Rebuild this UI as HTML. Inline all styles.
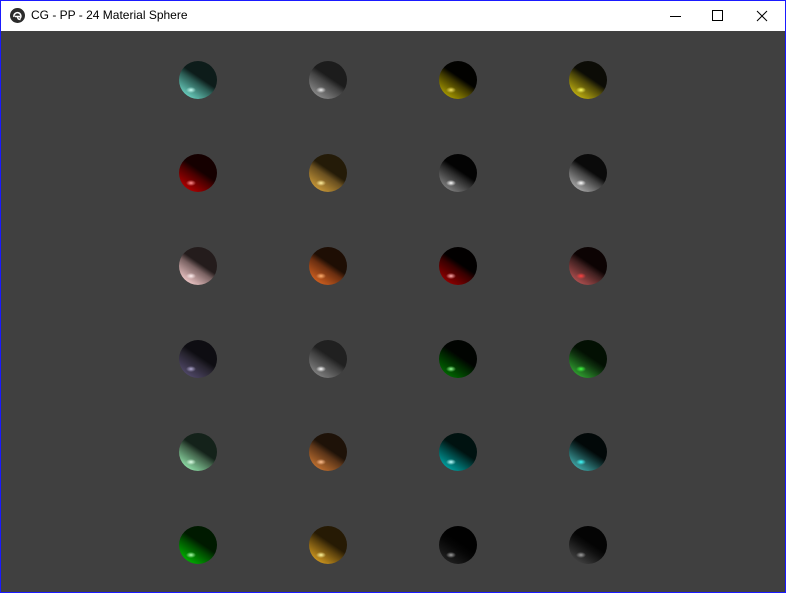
<!DOCTYPE html>
<html><head><meta charset="utf-8"><style>
*{margin:0;padding:0;box-sizing:border-box}
html,body{width:786px;height:593px;overflow:hidden;background:#fff}
#win{position:absolute;left:0;top:0;width:786px;height:593px;border:1px solid #1a1aff;background:#404040}
#tb{position:absolute;left:0;top:0;width:784px;height:30px;background:#fff}
#title{position:absolute;left:30px;top:7px;font:12px "Liberation Sans",sans-serif;color:#000}
#ic{position:absolute;left:9px;top:7px;width:15px;height:15px;border-radius:50%;background:#2b2b2b}
.s{position:absolute;width:38px;height:38px;border-radius:50%;
background:radial-gradient(ellipse 5px 3px at 12px 29px,var(--s),transparent),
linear-gradient(34deg,var(--l) 12%,var(--m) 44%,var(--d) 56%,var(--d))}
</style></head><body><div id="win">
<div id="tb"><div id="ic"><svg width="15" height="15" viewBox="0 0 15 15"><path d="M4 9a3.5 3.5 0 1 1 6 1.5M5 8.5h5M7.5 8.5c0 2 1 3 3 3" stroke="#fff" stroke-width="1.5" fill="none"/></svg></div>
<div id="title">CG - PP - 24 Material Sphere</div>
<svg style="position:absolute;left:664px;top:9px" width="110" height="12"><path d="M5 6.5h11" stroke="#000"/><rect x="47.5" y="0.5" width="10" height="10" fill="none" stroke="#000"/><path d="M92 1l10 10M102 1l-10 10" stroke="#000"/></svg>
</div>
<div class="s" style="left:178px;top:60px;--l:#6ad0c0;--m:#2a5a52;--d:#0d1c1a;--s:#c8fff4"></div>
<div class="s" style="left:308px;top:60px;--l:#8a8a8a;--m:#444;--d:#1c1c1c;--s:#eee"></div>
<div class="s" style="left:438px;top:60px;--l:#a89a00;--m:#3a3400;--d:#020200;--s:#f0e060"></div>
<div class="s" style="left:568px;top:60px;--l:#c0b010;--m:#4a4408;--d:#0c0c06;--s:#ffff60"></div>

<div class="s" style="left:178px;top:153px;--l:#b00000;--m:#480000;--d:#150000;--s:#ff9090"></div>
<div class="s" style="left:308px;top:153px;--l:#c89838;--m:#6a5020;--d:#241b08;--s:#fff0a0"></div>
<div class="s" style="left:438px;top:153px;--l:#808080;--m:#2a2a2a;--d:#030303;--s:#fff"></div>
<div class="s" style="left:568px;top:153px;--l:#a8a8a8;--m:#404040;--d:#0a0a0a;--s:#fff"></div>

<div class="s" style="left:178px;top:246px;--l:#f0c8c8;--m:#7a6262;--d:#241c1c;--s:#fff0f0"></div>
<div class="s" style="left:308px;top:246px;--l:#d06020;--m:#6a2e10;--d:#1e0e04;--s:#ffb070"></div>
<div class="s" style="left:438px;top:246px;--l:#900000;--m:#380000;--d:#020000;--s:#ffb0b0"></div>
<div class="s" style="left:568px;top:246px;--l:#b05050;--m:#402020;--d:#0c0303;--s:#ff4040"></div>

<div class="s" style="left:178px;top:339px;--l:#504868;--m:#26232e;--d:#0e0d12;--s:#b0a8d0"></div>
<div class="s" style="left:308px;top:339px;--l:#808080;--m:#404040;--d:#202020;--s:#fff"></div>
<div class="s" style="left:438px;top:339px;--l:#006800;--m:#002200;--d:#010401;--s:#90ff90"></div>
<div class="s" style="left:568px;top:339px;--l:#30a030;--m:#0e300e;--d:#031003;--s:#40ff40"></div>

<div class="s" style="left:178px;top:432px;--l:#90e0a8;--m:#406048;--d:#14221a;--s:#e0ffe8"></div>
<div class="s" style="left:308px;top:432px;--l:#c07030;--m:#5a3418;--d:#1e1208;--s:#ffc090"></div>
<div class="s" style="left:438px;top:432px;--l:#00a0a0;--m:#003a38;--d:#001210;--s:#c0ffff"></div>
<div class="s" style="left:568px;top:432px;--l:#40a8a8;--m:#103030;--d:#020808;--s:#40ffff"></div>

<div class="s" style="left:178px;top:525px;--l:#00b000;--m:#004800;--d:#001a00;--s:#b0ffb0"></div>
<div class="s" style="left:308px;top:525px;--l:#d09820;--m:#5a400c;--d:#261a04;--s:#fff8a0"></div>
<div class="s" style="left:438px;top:525px;--l:#202020;--m:#060606;--d:#010101;--s:#a0a0a0"></div>
<div class="s" style="left:568px;top:525px;--l:#404040;--m:#101010;--d:#040404;--s:#a0a0a0"></div>
</div></body></html>
